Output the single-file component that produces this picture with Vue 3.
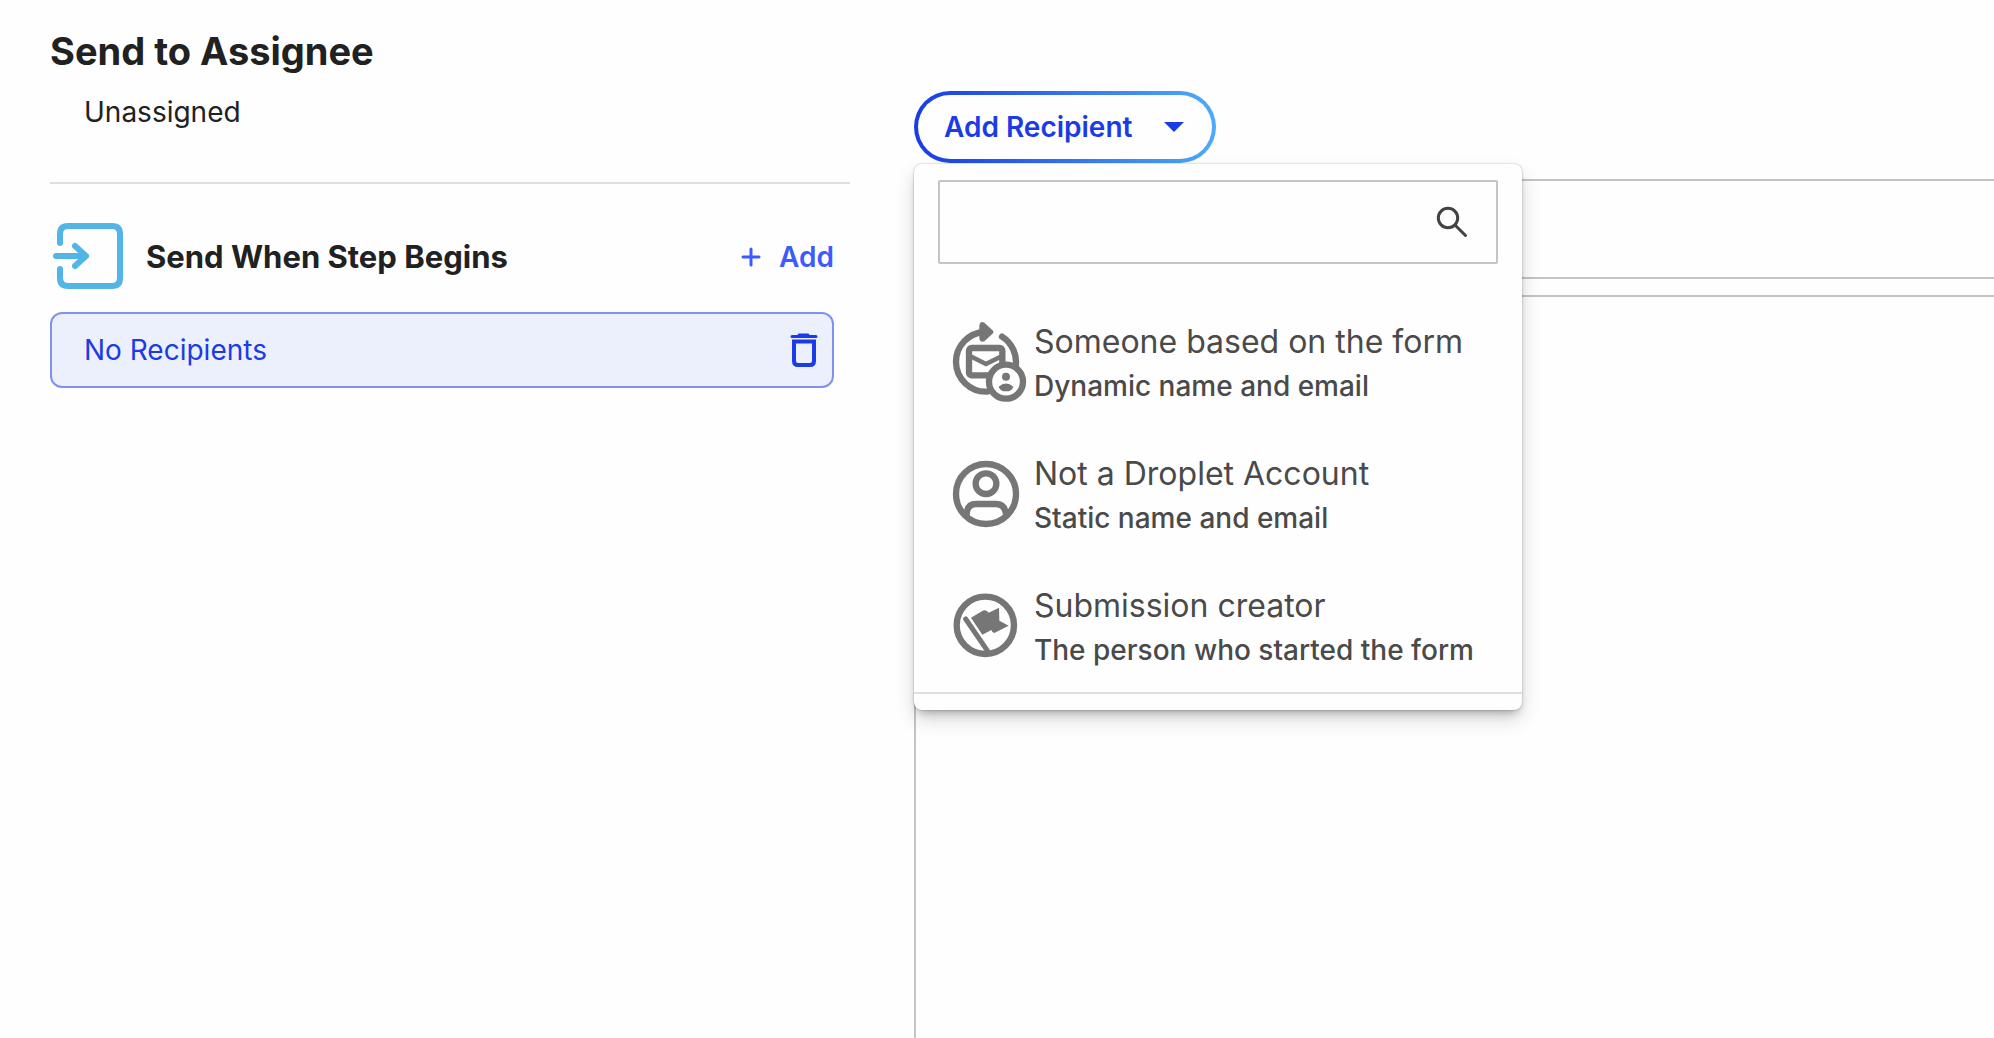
<script setup>
import { ref } from 'vue'

const search = ref('')
const menuOpen = ref(true)
const hasRow = ref(true)

const options = [
  { id: 'dynamic', title: 'Someone based on the form', sub: 'Dynamic name and email' },
  { id: 'static', title: 'Not a Droplet Account', sub: 'Static name and email' },
  { id: 'creator', title: 'Submission creator', sub: 'The person who started the form' }
]

function toggleMenu () {
  menuOpen.value = !menuOpen.value
}
</script>

<template>
  <div class="page">
    <section class="steps">
      <h1>Send to Assignee</h1>
      <p class="assignee">Unassigned</p>
      <hr>
      <div class="stepHeader">
        <svg class="stepIcon" viewBox="0 0 72 70" aria-hidden="true">
          <path d="M8 21V12Q8 4 16 4H60Q68 4 68 12V56Q68 64 60 64H16Q8 64 8 56V47" />
          <path d="M4 34H34M23 24L34 34L23 44" />
        </svg>
        <h2>Send When Step Begins</h2>
        <button class="addBtn" @click="hasRow = true">
          <svg viewBox="0 0 20 20" aria-hidden="true"><path d="M10 2V18M2 10H18" /></svg>
          <span>Add</span>
        </button>
      </div>
      <div v-if="hasRow" class="recipientRow">
        <span>No Recipients</span>
        <button class="deleteBtn" aria-label="Delete" @click="hasRow = false">
          <svg viewBox="0 0 28 36" aria-hidden="true">
            <path class="lid" d="M2 4.500H26M9 3H18" />
            <path class="can" d="M4 9.500H24V29Q24 33 20 33H8Q4 33 4 29Z" />
          </svg>
        </button>
      </div>
    </section>

    <section class="editor">
      <div class="dropdown">
        <button class="recipientBtn" :aria-expanded="menuOpen" @click="toggleMenu">
          <span>Add Recipient</span>
          <svg viewBox="0 0 20 10" aria-hidden="true"><path d="M0 0H20L10 10Z" /></svg>
        </button>
        <div v-if="menuOpen" class="menu">
          <label class="searchBox">
            <input v-model="search" type="text" aria-label="Search recipients">
            <svg viewBox="0 0 32 32" aria-hidden="true">
              <circle cx="12" cy="12" r="9.700" />
              <path d="M19.500 19.500L29.500 29.500" />
            </svg>
          </label>
          <ul>
            <li v-for="option in options" :key="option.id">
              <button class="option">
                <!-- envelope in a refresh arrow, with a person badge -->
                <svg v-if="option.id === 'dynamic'" viewBox="66 60 228 264" aria-hidden="true">
                  <path d="M162 96A90 90 0 0 0 78 186A90 90 0 0 0 172 275M216 110A90 90 0 0 1 257 200" />
                  <path class="solid" d="M148 77Q150 61 164 69L190 93V99L164 123Q150 130 148 114Z" />
                  <rect x="117" y="144" width="100" height="82" rx="8" />
                  <path class="thin" d="M120 168L168 192L216 168" />
                  <circle class="badge" cx="228" cy="245" r="51" />
                  <circle class="solid" cx="228" cy="230" r="12" />
                  <path class="solid" d="M206 260Q228 241 250 260Q246 274 228 274Q210 274 206 260Z" />
                </svg>
                <svg v-else-if="option.id === 'static'" viewBox="66 36 228 264" aria-hidden="true">
                  <circle cx="168" cy="162" r="90" />
                  <circle cx="168" cy="131" r="31" />
                  <path d="M110 222Q112 192 138 192H198Q224 192 228 222" />
                </svg>
                <svg v-else viewBox="66 432 228 264" aria-hidden="true">
                  <circle cx="166" cy="556" r="86" />
                  <path class="pole" d="M107 537L172 632" />
                  <path class="solid" d="M123 533L158 512Q168 508 176 518L207 503L208 542L236 557L193 579Q186 577 184 570L157 584Z" />
                </svg>
                <span class="optionText">
                  <span class="optionTitle">{{ option.title }}</span>
                  <span class="optionSub">{{ option.sub }}</span>
                </span>
              </button>
            </li>
          </ul>
        </div>
      </div>
      <div class="toolbar"></div>
      <div class="canvas"></div>
    </section>
  </div>
</template>

<style>
body {
  background-color: #fefefe;
}
</style>

<style scoped>
.page {
  display: flex;
  gap: 64px;
  min-height: 100vh;
  padding-left: 50px;
  box-sizing: border-box;
  overflow: hidden;
  font-family: Inter, "Liberation Sans", sans-serif;
  font-size: 28px;
  color: #212121;
}

button {
  font: inherit;
  color: inherit;
  background: none;
  border: none;
  padding: 0;
  cursor: pointer;
}

svg {
  display: block;
  flex: none;
  fill: none;
  stroke: currentColor;
  stroke-linecap: round;
  stroke-linejoin: round;
}

.steps {
  flex: 0 1 800px;
  padding-top: 28px;
}

h1 {
  margin: 0;
  font-size: 38px;
  line-height: 46px;
  font-weight: 700;
}

.assignee {
  margin: 0;
  padding: 16px 0 48px 34px;
  line-height: 44px;
}

hr {
  margin: 0;
  border: none;
  border-top: 2px solid #dedede;
}

.stepHeader {
  display: flex;
  align-items: center;
  padding: 38px 16px 20px 2px;
}

.stepIcon {
  width: 72px;
  height: 70px;
  color: #53b4e6;
  stroke-width: 6;
}

h2 {
  margin: 0 auto 0 22px;
  font-size: 31px;
  line-height: 40px;
  font-weight: 700;
}

.addBtn {
  display: flex;
  align-items: center;
  gap: 18px;
  font-weight: 600;
  color: #3d5afe;
}

.addBtn svg {
  width: 20px;
  height: 20px;
  stroke-width: 3;
}

.recipientRow {
  display: flex;
  align-items: center;
  justify-content: space-between;
  height: 76px;
  margin-right: 16px;
  padding: 0 14px 0 32px;
  box-sizing: border-box;
  border: 2px solid #7f93ee;
  border-radius: 12px;
  background-color: #ecf0fd;
  color: #1a3be6;
}

.deleteBtn svg {
  width: 28px;
  height: 36px;
  stroke-width: 3;
}

.deleteBtn .can {
  stroke-width: 4;
  stroke-linejoin: miter;
}

.editor {
  flex: 1;
  display: flex;
  flex-direction: column;
  min-width: 0;
  padding-top: 91px;
}

.dropdown {
  position: relative;
  align-self: flex-start;
}

.recipientBtn {
  display: flex;
  align-items: center;
  gap: 32px;
  height: 72px;
  padding: 0 28px 0 26px;
  border: 4px solid transparent;
  border-radius: 36px;
  background: linear-gradient(#fefefe, #fefefe) padding-box, linear-gradient(90deg, #1a3be6, #4dabf8) border-box;
  font-weight: 600;
  color: #1a3be6;
}

.recipientBtn svg {
  width: 20px;
  height: 10px;
  fill: currentColor;
  stroke: none;
}

.menu {
  position: absolute;
  top: 100%;
  left: 0;
  z-index: 1;
  width: 608px;
  margin-top: 1px;
  padding: 16px 0;
  box-sizing: border-box;
  border-radius: 8px;
  background-color: #fefefe;
  box-shadow: 0 0 2px rgba(0, 0, 0, 0.3), 0 10px 20px rgba(0, 0, 0, 0.14), 0 6px 10px -4px rgba(0, 0, 0, 0.3);
  color: #4a4a4a;
}

.searchBox {
  display: flex;
  align-items: center;
  height: 84px;
  margin: 0 24px 34px;
  padding: 0 28px 0 24px;
  box-sizing: border-box;
  border: 2px solid #c4c4c4;
  border-radius: 2px;
}

.searchBox input {
  flex: 1;
  min-width: 0;
  border: none;
  outline: none;
  background: none;
  font: inherit;
}

.searchBox svg {
  width: 32px;
  height: 32px;
  color: #424242;
  stroke-width: 3;
}

ul {
  margin: 0;
  padding: 0;
  list-style: none;
  border-bottom: 2px solid #dedede;
}

.option {
  display: flex;
  align-items: center;
  gap: 6px;
  width: 100%;
  height: 132px;
  padding: 0 38px;
  text-align: left;
}

li:last-child .option {
  height: 130px;
  padding-top: 2px;
}

.option svg {
  width: 76px;
  height: 88px;
  color: #767676;
  stroke-width: 19;
}

.option .thin {
  stroke-width: 14;
}

.option .pole {
  stroke-width: 15;
}

.option .solid {
  fill: currentColor;
  stroke: none;
}

.option .badge {
  fill: #fefefe;
}

.optionText {
  display: flex;
  flex-direction: column;
  line-height: 44px;
  white-space: nowrap;
}

.optionTitle {
  font-size: 32px;
}

.optionSub {
  font-weight: 500;
}

.toolbar {
  height: 100px;
  margin: 16px 0;
  box-sizing: border-box;
  border: 2px solid #c4c4c4;
  border-right: none;
}

.canvas {
  flex: 1;
  border: 2px solid #c4c4c4;
  border-width: 2px 0 0 2px;
}
</style>
